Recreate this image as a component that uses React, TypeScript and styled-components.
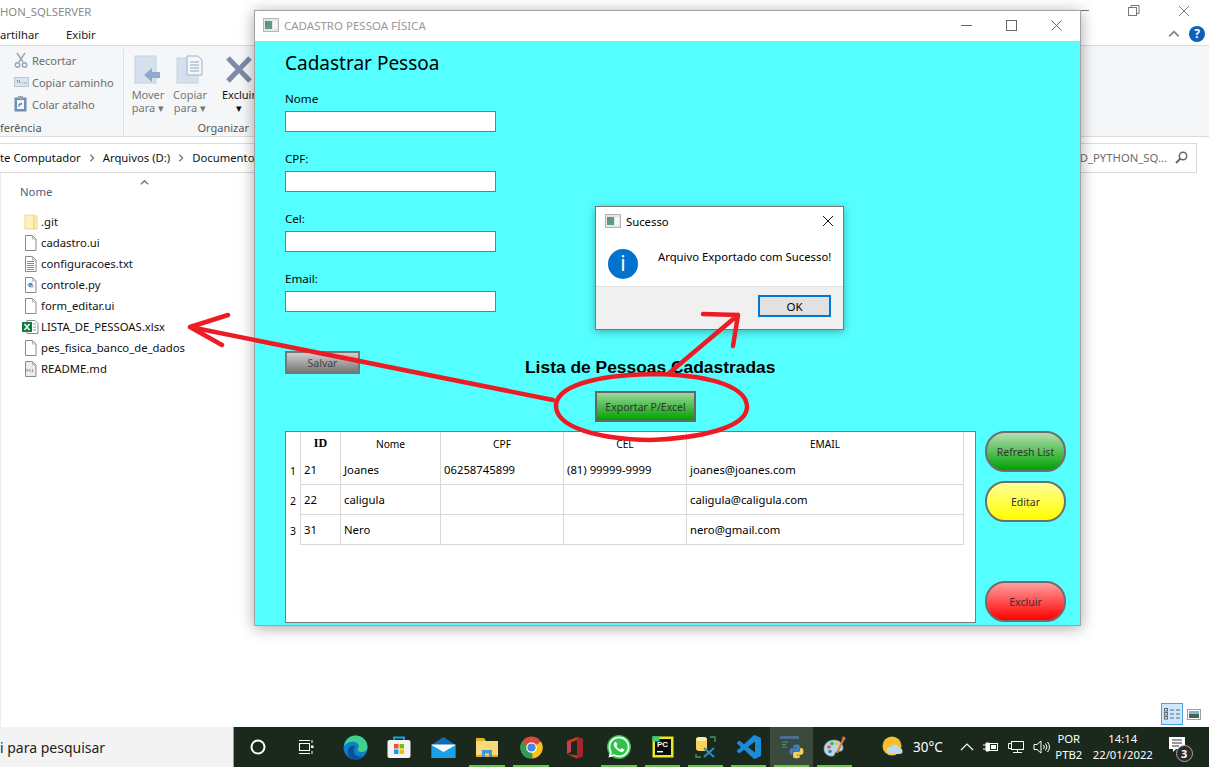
import React from "react";
import styled, { createGlobalStyle } from "styled-components";
import { FaWhatsapp } from "react-icons/fa";

const GlobalStyle = createGlobalStyle`
  html, body { margin: 0; padding: 0; background: #fff; }
  body { font-family: "Noto Sans", "Open Sans", sans-serif; font-size: 11.3px; color: #000; }
  * { box-sizing: border-box; }
`;

const files = [
  { name: ".git", icon: "folder" },
  { name: "cadastro.ui", icon: "doc" },
  { name: "configuracoes.txt", icon: "txt" },
  { name: "controle.py", icon: "py" },
  { name: "form_editar.ui", icon: "doc" },
  { name: "LISTA_DE_PESSOAS.xlsx", icon: "xls" },
  { name: "pes_fisica_banco_de_dados", icon: "doc" },
  { name: "README.md", icon: "md" },
];

const people = [
  { id: 21, nome: "Joanes", cpf: "06258745899", cel: "(81) 99999-9999", email: "joanes@joanes.com" },
  { id: 22, nome: "caligula", cpf: "", cel: "", email: "caligula@caligula.com" },
  { id: 31, nome: "Nero", cpf: "", cel: "", email: "nero@gmail.com" },
];

const FileIcon: React.FC<{ kind: string }> = ({ kind }) => {
  if (kind === "folder") {
    return (
      <svg width="14" height="16" viewBox="0 0 14 16">
        <path d="M1 1h8l4 1v13H1z" fill="#fff0bd" stroke="#ecd98f" />
        <path d="M10 2v13" stroke="#f5dd8e" strokeWidth="2" />
      </svg>
    );
  }
  if (kind === "xls") {
    return (
      <svg width="17" height="16" viewBox="0 0 17 16">
        <path d="M5 1.5h8l3 3v10H5z" fill="#fff" stroke="#8a8a8a" />
        <path d="M11 5h3M11 8h3M11 11h3" stroke="#6fae8a" />
        <rect x="0" y="3" width="10" height="10" fill="#107c41" />
        <path d="M2.5 5l5 6M7.5 5l-5 6" stroke="#fff" strokeWidth="1.4" />
      </svg>
    );
  }
  return (
    <svg width="13" height="16" viewBox="0 0 13 16">
      <path d="M1.5.5h7l3.5 3.5v11.5H1.5z" fill={kind === "md" ? "#ececec" : "#fff"} stroke="#8a8a8a" />
      <path d="M8.5.5V4H12" fill="none" stroke="#b0b0b0" />
      {kind === "txt" && <path d="M3 5.5h7M3 7.5h7M3 9.5h7M3 11.5h7M3 13.5h7" stroke="#8a8a8a" />}
      {kind === "py" && (
        <g>
          <circle cx="6.5" cy="8" r="2.3" fill="#4a84b5" />
          <path d="M6.5 8h3v2.5h-3z" fill="#9bb9cf" />
          <path d="M3.5 7h3v1.5h-3z" fill="#86abc9" />
        </g>
      )}
      {kind === "md" && <path d="M3 11V8l1.5 1.5L6 8v3M8.5 8v3M7.5 10l1 1 1-1" fill="none" stroke="#a0a0a0" />}
    </svg>
  );
};

const QtIcon: React.FC = () => (
  <svg width="16" height="14" viewBox="0 0 16 14">
    <rect x="0.5" y="0.5" width="15" height="13" fill="#e3e6e6" stroke="#b5b5b5" />
    <rect x="2" y="3" width="7" height="8" fill="#5f9a86" />
    <rect x="2" y="3" width="3" height="4" fill="#6f7fa6" />
    <rect x="10" y="3" width="4" height="8" fill="#f5f7f7" />
  </svg>
);

const Chevron: React.FC<{ up?: boolean; color?: string; size?: number }> = ({ up, color = "#000", size = 10 }) => (
  <svg width={size} height={size} viewBox="0 0 10 10">
    <path d={up ? "M1 7l4-4 4 4" : "M3 1l4 4-4 4"} fill="none" stroke={color} strokeWidth="1.6" />
  </svg>
);

const TaskIcons: Record<string, React.ReactNode> = {
  cortana: (
    <svg width="16" height="16" viewBox="0 0 16 16">
      <circle cx="8" cy="8" r="6.5" fill="none" stroke="#fff" strokeWidth="2" />
    </svg>
  ),
  tasks: (
    <svg width="16" height="16" viewBox="0 0 16 16" fill="none" stroke="#fff">
      <path d="M1 1.5h11M1 14.5h11" />
      <rect x="1.5" y="4.5" width="10" height="7" />
      <path d="M14 1v3M14 12v3" />
      <rect x="13" y="6.5" width="2.5" height="2.5" fill="#fff" stroke="none" />
    </svg>
  ),
  edge: (
    <svg width="25" height="25" viewBox="0 0 24 24">
      <circle cx="12" cy="12" r="11.5" fill="#0f7fc6" />
      <path d="M1 11C2 4 7 .5 12 .5c6 0 11.5 4.5 11.5 11 0 3-2.5 5-5.5 5-2 0-4-.8-4-2.5 0-1 1-1.5 1-3C15 8 12.5 6.5 10 6.5 6 6.5 2.5 8.5 1 11z" fill="#3fcf8e" />
      <path d="M11 23.5C6 23 3 18 5.5 13c1.5-3 5-3.5 6.5-1.5-2 1-2.5 4.5-.5 7 2 2.3 5 2.8 7.5 2-2 1.8-5 3-7.5 3z" fill="#0a4f9c" />
    </svg>
  ),
  store: (
    <svg width="24" height="24" viewBox="0 0 24 24">
      <path d="M7 5V2.5h10V5" fill="none" stroke="#1ba1e2" strokeWidth="1.8" />
      <rect x="0.5" y="5" width="23" height="18" rx="2" fill="#f4f4f4" />
      <rect x="7" y="9" width="4.5" height="4.5" fill="#f25022" />
      <rect x="12.5" y="9" width="4.5" height="4.5" fill="#7fba00" />
      <rect x="7" y="14.5" width="4.5" height="4.5" fill="#00a4ef" />
      <rect x="12.5" y="14.5" width="4.5" height="4.5" fill="#ffb900" />
    </svg>
  ),
  mail: (
    <svg width="25" height="23" viewBox="0 0 25 23">
      <path d="M.5 9L12.5 1l12 8v13H.5z" fill="#0f6cbd" />
      <path d="M.5 9h24v13H.5z" fill="#1ba1e8" />
      <path d="M.5 9l12 7 12-7v-.5H.5z" fill="#fff" />
    </svg>
  ),
  explorer: (
    <svg width="24" height="21" viewBox="0 0 24 21">
      <path d="M1 1h8l2 3h12v16H1z" fill="#e8b02e" />
      <rect x="1" y="4" width="22" height="14" fill="#f9d978" />
      <path d="M7 20v-7h10v7h-3v-3.5h-4V20z" fill="#3f96d8" />
      <rect x="1" y="18" width="6" height="2" fill="#e0a92c" />
      <rect x="17" y="18" width="6" height="2" fill="#e0a92c" />
    </svg>
  ),
  chrome: (
    <svg width="23" height="23" viewBox="0 0 24 24">
      <circle cx="12" cy="12" r="11.5" fill="#e0463a" />
      <path d="M12 12L22 6a11.5 11.5 0 0 1-9 17.5z" fill="#f5c518" />
      <path d="M12 12l1 11.5A11.5 11.5 0 0 1 2 6z" fill="#2f9e50" />
      <circle cx="12" cy="12" r="5.5" fill="#fff" />
      <circle cx="12" cy="12" r="4.3" fill="#4a86e8" />
    </svg>
  ),
  office: (
    <svg width="18" height="23" viewBox="0 0 18 23">
      <path d="M1 5L11 1l6 2v17l-6 2.5L1 18l10 1.5V4L5 6.5v9L1 18z" fill="#d83b01" />
      <path d="M11 1l6 2v17l-6 2.5z" fill="#a4262c" />
      <path d="M1 5l4 1.5v9L1 18z" fill="#c73e5c" />
    </svg>
  ),
  pycharm: (
    <svg width="22" height="22" viewBox="0 0 22 22">
      <rect x="0.5" y="0.5" width="21" height="21" fill="#e7e92d" />
      <rect x="3" y="3" width="16" height="16" fill="#0b0b0b" />
      <rect x="0.5" y="0.5" width="7" height="5" fill="#21d789" />
      <text x="5" y="11" fontSize="8" fontWeight="700" fontFamily="Liberation Sans, sans-serif" fill="#fff">PC</text>
      <rect x="5" y="15" width="6" height="1.4" fill="#fff" />
    </svg>
  ),
  db: (
    <svg width="22" height="23" viewBox="0 0 22 23">
      <rect x="1" y="1" width="11" height="14" rx="3" fill="#f4d35e" />
      <ellipse cx="6.5" cy="3" rx="5.5" ry="2" fill="#fbeeb0" />
      <path d="M15 1h5v5M1 18v3h5" fill="none" stroke="#3f9a63" strokeWidth="1.3" />
      <path d="M9 12l10 9M19 12L9 21" stroke="#2a8fd0" strokeWidth="2" />
    </svg>
  ),
  vscode: (
    <svg width="24" height="24" viewBox="0 0 24 24">
      <path fill="#1a8cdb" d="M23.15 2.587L18.21.21a1.494 1.494 0 0 0-1.705.29l-9.46 8.63-4.12-3.128a.999.999 0 0 0-1.276.057L.327 7.261A1 1 0 0 0 .326 8.74L3.899 12 .326 15.26a1 1 0 0 0 .001 1.479L1.65 17.94a.999.999 0 0 0 1.276.057l4.12-3.128 9.46 8.63a1.492 1.492 0 0 0 1.704.29l4.942-2.377A1.5 1.5 0 0 0 24 20.06V3.939a1.5 1.5 0 0 0-.85-1.352zm-5.146 14.861L10.826 12l7.178-5.448v10.896z" />
    </svg>
  ),
  python: (
    <svg width="24" height="24" viewBox="0 0 24 24">
      <rect x="0" y="1" width="19" height="16" fill="#37474a" />
      <rect x="0" y="1" width="19" height="3" fill="#4a6f8c" />
      <path d="M2 7h6M2 9.5h4M2 12h5" stroke="#4f9c5c" />
      <g transform="translate(9 9) scale(.62)">
        <path fill="#3f7fb5" d="M11.9 1C6.3 1 6.6 3.4 6.6 3.4V6H12v.8H4.4S.8 6.4.8 12s3.2 5.4 3.2 5.4h1.9v-2.6s-.1-3.2 3.1-3.2h5.4s3 0 3-2.9V3.9S18 1 11.9 1z" />
        <path fill="#f7d154" transform="rotate(180 12 12)" d="M11.9 1C6.3 1 6.6 3.4 6.6 3.4V6H12v.8H4.4S.8 6.4.8 12s3.2 5.4 3.2 5.4h1.9v-2.6s-.1-3.2 3.1-3.2h5.4s3 0 3-2.9V3.9S18 1 11.9 1z" />
      </g>
    </svg>
  ),
  paint: (
    <svg width="24" height="24" viewBox="0 0 24 24">
      <path d="M11 5C5 5 1 9 1 14c0 5 5 8 9 7 2.5-.5 1-3 3-4 3-1.5 7 .5 7-4 0-5-4-8-9-8z" fill="#b9d4e3" stroke="#7d9bb0" strokeWidth=".6" />
      <circle cx="6" cy="12" r="1.8" fill="#e2574c" />
      <circle cx="9" cy="8.5" r="1.8" fill="#3fae5a" />
      <circle cx="14" cy="8.5" r="1.8" fill="#f2c12e" />
      <circle cx="7" cy="16.5" r="1.8" fill="#3f82c8" />
      <path d="M14 18L21 3" stroke="#c9843a" strokeWidth="2" />
      <path d="M20 1l3 2-2 3-2.5-1z" fill="#e0663a" />
    </svg>
  ),
};

const tasks = [
  { key: "edge" },
  { key: "store" },
  { key: "mail" },
  { key: "explorer", running: true },
  { key: "chrome", running: true },
  { key: "office" },
  { key: "whatsapp", running: true },
  { key: "pycharm", running: true, narrow: true },
  { key: "db", running: true, narrow: true },
  { key: "vscode", running: true, narrow: true },
  { key: "python", running: true, narrow: true, current: true },
  { key: "paint", running: true, narrow: true },
];

export default function App() {
  return (
    <>
      <GlobalStyle />
      <Desktop>
        <TitleRow>
          <TitleText>HON_SQLSERVER</TitleText>
          <WinControls>
            <svg width="12" height="12" viewBox="0 0 12 12"><path d="M0 5.5h11" stroke="#777" /></svg>
            <svg width="12" height="12" viewBox="0 0 12 12" fill="none" stroke="#777"><rect x=".5" y="2.5" width="8" height="8" /><path d="M3 2.5V.5h8v8H8.5" /></svg>
            <svg width="12" height="12" viewBox="0 0 12 12" stroke="#777"><path d="M1 1l10 10M11 1L1 11" /></svg>
          </WinControls>
        </TitleRow>
        <TabsRow>
          <Tab $width={66}>artilhar</Tab>
          <Tab $width={40}>Exibir</Tab>
          <TabsRight>
            <Chevron up color="#8a8a8a" size={12} />
            <HelpBadge>?</HelpBadge>
          </TabsRight>
        </TabsRow>
        <Ribbon>
          <RibbonGroup $width={124}>
            <RibbonSmallList>
              <RibbonSmall>
                <svg width="14" height="16" viewBox="0 0 14 16" fill="none" stroke="#8ea4bf">
                  <path d="M3 1l6 9M11 1L5 10" strokeWidth="1.4" stroke="#9aa5b1" />
                  <circle cx="3.5" cy="13" r="2.2" strokeWidth="1.4" />
                  <circle cx="10.5" cy="13" r="2.2" strokeWidth="1.4" />
                </svg>
                Recortar
              </RibbonSmall>
              <RibbonSmall>
                <svg width="15" height="10" viewBox="0 0 15 10">
                  <rect x=".5" y=".5" width="14" height="9" fill="#dbe4f0" stroke="#b9c6d8" />
                  <path d="M3 3l1 3M5 3l1 3M8 6h1M10 6h1M12 6h1" stroke="#8a8a8a" />
                </svg>
                Copiar caminho
              </RibbonSmall>
              <RibbonSmall>
                <svg width="13" height="16" viewBox="0 0 13 16">
                  <rect x=".5" y="1.5" width="12" height="14" fill="#6f90b5" />
                  <rect x="3" y="4" width="7" height="9" fill="#f2f4f7" />
                  <rect x="4" y="0" width="5" height="3" fill="#9aa5b1" />
                  <path d="M5 11V8h3M6 9l2-2" stroke="#4a77a8" fill="none" />
                </svg>
                Colar atalho
              </RibbonSmall>
            </RibbonSmallList>
            <GroupLabel $align="left">ferência</GroupLabel>
          </RibbonGroup>
          <RibbonGroup $width={132}>
            <RibbonLarge>
              <RibbonTool $width={44}>
                <svg width="28" height="29" viewBox="0 0 28 29">
                  <rect x="1" y="1" width="21" height="27" fill="#d5e0ee" stroke="#c4d2e4" />
                  <path d="M10 20l8-7v4h8v6h-8v4z" fill="#90a9c8" />
                </svg>
                <ToolText>Mover<br />para ▾</ToolText>
              </RibbonTool>
              <RibbonTool $width={40}>
                <svg width="28" height="29" viewBox="0 0 28 29">
                  <rect x="1" y="3" width="21" height="25" fill="#d5e0ee" stroke="#c4d2e4" />
                  <path d="M11 1h11l4 4v15H11z" fill="#f4f6f9" stroke="#9fb2c9" />
                  <path d="M14 7h9M14 10h9M14 13h9M14 16h9" stroke="#9aa5b1" />
                </svg>
                <ToolText>Copiar<br />para ▾</ToolText>
              </RibbonTool>
              <ToolDivider />
              <RibbonTool $width={40} $strong>
                <svg width="28" height="29" viewBox="0 0 28 29">
                  <path d="M3 3l22 23M25 3L3 26" stroke="#7b8ba8" strokeWidth="5" />
                </svg>
                <ToolText>Excluir<br />▾</ToolText>
              </RibbonTool>
            </RibbonLarge>
            <GroupLabel $align="right">Organizar</GroupLabel>
          </RibbonGroup>
        </Ribbon>
        <AddressRow>
          <AddressBar>
            <span>te Computador</span>
            <Chevron color="#777" size={8} />
            <span>Arquivos (D:)</span>
            <Chevron color="#777" size={8} />
            <span>Documentos</span>
          </AddressBar>
          <SearchBox>
            <span>D_PYTHON_SQ...</span>
            <svg width="13" height="13" viewBox="0 0 13 13" fill="none" stroke="#666" strokeWidth="1.5">
              <circle cx="8" cy="5" r="3.7" />
              <path d="M5.5 7.5L1 12" strokeWidth="2" />
            </svg>
          </SearchBox>
        </AddressRow>
        <Content>
          <SortMark><Chevron up color="#777" size={9} /></SortMark>
          <ColumnHeader>Nome</ColumnHeader>
          <FileList>
            {files.map((f) => (
              <FileRow key={f.name}>
                <FileIconBox><FileIcon kind={f.icon} /></FileIconBox>
                {f.name}
              </FileRow>
            ))}
          </FileList>
          <ViewButtons>
            <ViewButton $active>
              <svg width="17" height="12" viewBox="0 0 17 12" fill="none" stroke="#666">
                <rect x=".5" y=".5" width="3" height="2.5" />
                <rect x=".5" y="4.5" width="3" height="2.5" />
                <rect x=".5" y="8.5" width="3" height="2.5" />
                <path d="M6 2h4M12 2h4M6 6h4M12 6h4M6 10h4M12 10h4" />
              </svg>
            </ViewButton>
            <ViewButton>
              <svg width="14" height="11" viewBox="0 0 14 11">
                <rect x=".5" y=".5" width="13" height="10" fill="#fff" stroke="#a0a0a0" />
                <rect x="2" y="2" width="10" height="3" fill="#7fb7dc" />
                <rect x="2" y="5" width="10" height="4" fill="#44684f" />
              </svg>
            </ViewButton>
          </ViewButtons>
        </Content>
        <Taskbar>
          <SearchField>i para pesquisar</SearchField>
          <TaskSlot $width={48}>{TaskIcons.cortana}</TaskSlot>
          <TaskSlot $width={48}>{TaskIcons.tasks}</TaskSlot>
          <TaskGap />
          {tasks.map((t) => (
            <TaskSlot
              key={t.key}
              $width={t.narrow ? 43 : 44}
              $running={t.running}
              $current={t.current}
            >
              {t.key === "whatsapp" ? (
                <WhatsappBubble><FaWhatsapp size={24} color="#fff" /></WhatsappBubble>
              ) : (
                TaskIcons[t.key]
              )}
            </TaskSlot>
          ))}
          <Tray>
            <svg width="22" height="22" viewBox="0 0 22 22">
              <circle cx="10" cy="10" r="9.5" fill="#f7bf2e" />
              <path d="M8 18a3.5 3.5 0 0 1 .5-7 4.5 4.5 0 0 1 8.5 1 3 3 0 0 1 1 6z" fill="#bcd9ef" />
            </svg>
            <Temp>30°C</Temp>
            <TrayIcons>
              <svg width="14" height="10" viewBox="0 0 14 10" fill="none" stroke="#fff" strokeWidth="1.2"><path d="M1 8l6-6 6 6" /></svg>
              <svg width="16" height="12" viewBox="0 0 16 12" fill="none" stroke="#fff">
                <path d="M0 4h3M0 8h3M3 2h3v8H3z" fill="#fff" />
                <rect x="6.5" y="2.5" width="8" height="7" />
                <rect x="8" y="4" width="5" height="4" fill="#fff" stroke="none" />
              </svg>
              <svg width="16" height="14" viewBox="0 0 16 14" fill="none" stroke="#fff">
                <rect x="3.5" y="1.5" width="12" height="8" />
                <path d="M9.5 9.5v3M5 12.5h9M.5 3.5h3M.5 3.5v5h3" />
              </svg>
              <svg width="17" height="14" viewBox="0 0 17 14" fill="none" stroke="#fff">
                <path d="M1 4.5h3l4-3.5v12L4 9.5H1z" />
                <path d="M10.5 5a3 3 0 0 1 0 4M12.5 3.5a5.5 5.5 0 0 1 0 7M14.5 2a8 8 0 0 1 0 10" />
              </svg>
            </TrayIcons>
            <LangBlock>
              <span>POR</span>
              <span>PTB2</span>
            </LangBlock>
            <ClockBlock>
              <span>14:14</span>
              <span>22/01/2022</span>
            </ClockBlock>
            <NotifyBox>
              <svg width="17" height="16" viewBox="0 0 17 16">
                <path d="M0 0h16v12H7l-3 3v-3H0z" fill="#fff" />
                <path d="M3 3h10M3 6h10M3 9h7" stroke="#333" />
              </svg>
              <NotifyBadge>3</NotifyBadge>
            </NotifyBox>
          </Tray>
        </Taskbar>

        <MainWindow>
          <WindowTitle>
            <QtIcon />
            <WindowCaption>CADASTRO PESSOA FÍSICA</WindowCaption>
            <WindowControls>
              <svg width="11" height="11" viewBox="0 0 11 11"><path d="M0 5.5h11" stroke="#666" /></svg>
              <svg width="11" height="11" viewBox="0 0 11 11"><rect x=".5" y=".5" width="10" height="10" fill="none" stroke="#666" /></svg>
              <svg width="11" height="11" viewBox="0 0 11 11" stroke="#666"><path d="M.5.5l10 10M10.5.5l-10 10" /></svg>
            </WindowControls>
          </WindowTitle>
          <WindowBody>
            <FormHeading>Cadastrar Pessoa</FormHeading>
            {["Nome", "CPF:", "Cel:", "Email:"].map((label) => (
              <Field key={label}>
                <FieldLabel>{label}</FieldLabel>
                <FieldInput />
              </Field>
            ))}
            <MiddleRow>
              <SaveButton>Salvar</SaveButton>
              <ListHead>
                <ListTitle>Lista de Pessoas Cadastradas</ListTitle>
                <ExportButton>Exportar P/Excel</ExportButton>
              </ListHead>
            </MiddleRow>
            <TableRow>
              <TableFrame>
                <PeopleTable>
                  <colgroup>
                    <col style={{ width: 14 }} />
                    <col style={{ width: 41 }} />
                    <col style={{ width: 100 }} />
                    <col style={{ width: 123 }} />
                    <col style={{ width: 123 }} />
                    <col style={{ width: 277 }} />
                  </colgroup>
                  <thead>
                    <tr>
                      <CornerCell />
                      <HeadCell $first $serif>ID</HeadCell>
                      <HeadCell>Nome</HeadCell>
                      <HeadCell>CPF</HeadCell>
                      <HeadCell>CEL</HeadCell>
                      <HeadCell>EMAIL</HeadCell>
                    </tr>
                  </thead>
                  <tbody>
                    {people.map((p, i) => (
                      <tr key={p.id}>
                        <RowHead>{i + 1}</RowHead>
                        <DataCell $first>{p.id}</DataCell>
                        <DataCell>{p.nome}</DataCell>
                        <DataCell>{p.cpf}</DataCell>
                        <DataCell>{p.cel}</DataCell>
                        <DataCell>{p.email}</DataCell>
                      </tr>
                    ))}
                  </tbody>
                </PeopleTable>
              </TableFrame>
              <SideButtons>
                <PillButton $from="#b2dfb2" $to="#00a000">Refresh List</PillButton>
                <PillButton $from="#ffff99" $to="#ffff00">Editar</PillButton>
                <PillButton $from="#ff9f9f" $to="#ff0000" $pushed>Excluir</PillButton>
              </SideButtons>
            </TableRow>
          </WindowBody>
        </MainWindow>

        <Dialog>
          <DialogTitle>
            <QtIcon />
            <DialogCaption>Sucesso</DialogCaption>
            <svg width="12" height="12" viewBox="0 0 12 12" stroke="#111"><path d="M1 1l10 10M11 1L1 11" /></svg>
          </DialogTitle>
          <DialogBody>
            <InfoCircle>i</InfoCircle>
            <DialogText>Arquivo Exportado com Sucesso!</DialogText>
          </DialogBody>
          <DialogFooter>
            <OkButton>OK</OkButton>
          </DialogFooter>
        </Dialog>

        <Annotations width="1209" height="767" viewBox="0 0 1209 767" fill="none" stroke="#ed1c24" strokeWidth="4.5" strokeLinecap="round">
          <path d="M553 400L190 327M190 327L228 315M190 327L222 345" />
          <path d="M556 404C560 382 610 374 660 374C715 376 748 388 747 408C745 428 700 438 650 440C600 439 554 428 556 404Z" />
          <path d="M668 374L738 315M738 315L703 314M738 315L733 346" />
        </Annotations>
      </Desktop>
    </>
  );
}

const Desktop = styled.div`
  position: relative;
  width: 1209px;
  height: 767px;
  overflow: hidden;
  display: flex;
  flex-direction: column;
  background: #fff;
`;

const TitleRow = styled.div`
  height: 22px;
  display: flex;
  align-items: center;
  justify-content: space-between;
  padding-right: 19px;
`;

const TitleText = styled.div`
  color: #8a8a8a;
`;

const WinControls = styled.div`
  display: flex;
  gap: 38px;
`;

const TabsRow = styled.div`
  height: 23px;
  display: flex;
  align-items: center;
  padding: 1px 4px 0 0;
`;

const Tab = styled.div<{ $width: number }>`
  width: ${(p) => p.$width}px;
  color: #222;
`;

const TabsRight = styled.div`
  margin-left: auto;
  display: flex;
  align-items: center;
  gap: 9px;
`;

const HelpBadge = styled.div`
  width: 16px;
  height: 16px;
  border-radius: 50%;
  background: #0b62b8;
  color: #fff;
  font-weight: 700;
  font-size: 12px;
  line-height: 16px;
  text-align: center;
`;

const Ribbon = styled.div`
  height: 92px;
  display: flex;
  background: #f5f6f7;
  border-top: 1px solid #dadbdc;
  border-bottom: 1px solid #dadbdc;
`;

const RibbonGroup = styled.div<{ $width: number }>`
  width: ${(p) => p.$width}px;
  display: flex;
  flex-direction: column;
  border-right: 1px solid #dfe1e3;
  margin-top: 3px;
`;

const RibbonSmallList = styled.div`
  flex: 1;
  display: flex;
  flex-direction: column;
  gap: 4px;
  padding: 2px 0 0 14px;
`;

const RibbonSmall = styled.div`
  height: 18px;
  display: grid;
  grid-template-columns: 18px auto;
  align-items: center;
  color: #6d6d6d;
  font-size: 11px;
  white-space: nowrap;
`;

const GroupLabel = styled.div<{ $align: string }>`
  height: 16px;
  line-height: 16px;
  font-size: 11px;
  color: #555;
  text-align: ${(p) => p.$align};
  padding-right: 6px;
`;

const RibbonLarge = styled.div`
  flex: 1;
  display: flex;
  padding: 6px 0 0 2px;
`;

const RibbonTool = styled.div<{ $width: number; $strong?: boolean }>`
  width: ${(p) => p.$width}px;
  display: flex;
  flex-direction: column;
  align-items: center;
  color: ${(p) => (p.$strong ? "#111" : "#777")};
  flex-shrink: 0;
`;

const ToolText = styled.div`
  font-size: 11px;
  line-height: 13px;
  text-align: center;
  margin-top: 4px;
  white-space: nowrap;
`;

const ToolDivider = styled.div`
  width: 1px;
  height: 55px;
  background: #dfe1e3;
  margin: 0 3px 0 6px;
`;

const AddressRow = styled.div`
  height: 30px;
  margin-top: 6px;
  display: flex;
  gap: 6px;
  padding-right: 12px;
  flex-shrink: 0;
`;

const AddressBar = styled.div`
  flex: 1;
  display: flex;
  align-items: center;
  gap: 7px;
  padding-bottom: 1px;
  border-top: 1px solid #d9d9d9;
  border-bottom: 1px solid #d9d9d9;
  color: #111;
`;

const SearchBox = styled.div`
  width: 190px;
  display: flex;
  align-items: center;
  justify-content: flex-end;
  gap: 8px;
  padding: 0 8px 1px 0;
  border: 1px solid #d9d9d9;
  color: #6d6d6d;
`;

const Content = styled.div`
  position: relative;
  flex: 1;
  padding-left: 19px;
  display: flex;
  flex-direction: column;
  min-height: 0;
  border-left: 1px solid #ececec;
`;

const SortMark = styled.div`
  position: absolute;
  left: 139px;
  top: 2px;
`;

const ColumnHeader = styled.div`
  height: 38px;
  line-height: 38px;
  color: #4c607a;
`;

const FileList = styled.div`
  display: flex;
  flex-direction: column;
`;

const FileRow = styled.div`
  height: 21px;
  display: flex;
  align-items: center;
  color: #111;
`;

const FileIconBox = styled.div`
  width: 21px;
  height: 16px;
  display: flex;
  justify-content: center;
`;

const ViewButtons = styled.div`
  margin: auto 0 1px;
  align-self: flex-end;
  display: flex;
  padding-right: 4px;
  height: 23px;
`;

const ViewButton = styled.div<{ $active?: boolean }>`
  width: 22px;
  height: 22px;
  display: flex;
  align-items: center;
  justify-content: center;
  background: ${(p) => (p.$active ? "#cce8ff" : "transparent")};
  border: 1px solid ${(p) => (p.$active ? "#4ba6e0" : "transparent")};
`;

const Taskbar = styled.div`
  height: 40px;
  flex-shrink: 0;
  display: flex;
  align-items: stretch;
  background: #1b291d;
`;

const SearchField = styled.div`
  width: 234px;
  background: #f3f3f3;
  color: #222;
  font-size: 14px;
  line-height: 42px;
  border-right: 1px solid #999;
`;

const TaskSlot = styled.div<{ $width: number; $running?: boolean; $current?: boolean }>`
  position: relative;
  width: ${(p) => p.$width}px;
  display: flex;
  align-items: center;
  justify-content: center;
  background: ${(p) => (p.$current ? "#3b4a3c" : "transparent")};
  &::after {
    content: "";
    display: ${(p) => (p.$running ? "block" : "none")};
    position: absolute;
    left: 4px;
    right: 4px;
    bottom: 0;
    height: 2px;
    background: #6cc24e;
  }
`;

const TaskGap = styled.div`
  width: 3px;
`;

const WhatsappBubble = styled.div`
  width: 24px;
  height: 24px;
  border-radius: 50%;
  background: #30c24a;
  display: flex;
  align-items: center;
  justify-content: center;
`;

const Tray = styled.div`
  flex: 1;
  display: flex;
  align-items: center;
  color: #fff;
  padding-left: 26px;
`;

const Temp = styled.div`
  font-size: 13.5px;
  margin-left: 9px;
`;

const TrayIcons = styled.div`
  display: flex;
  align-items: center;
  gap: 9px;
  margin-left: 17px;
`;

const LangBlock = styled.div`
  display: flex;
  flex-direction: column;
  align-items: center;
  width: 30px;
  margin-left: 4px;
  line-height: 16px;
`;

const ClockBlock = styled.div`
  display: flex;
  flex-direction: column;
  align-items: center;
  width: 64px;
  margin-left: 7px;
  line-height: 16px;
`;

const NotifyBox = styled.div`
  position: relative;
  margin-left: 14px;
  width: 26px;
  height: 20px;
`;

const NotifyBadge = styled.div`
  position: absolute;
  left: 7px;
  top: 8px;
  width: 17px;
  height: 17px;
  border-radius: 50%;
  border: 1px solid #aaa;
  background: #2a2a2a;
  font-size: 11px;
  font-weight: 700;
  line-height: 15px;
  text-align: center;
`;

const MainWindow = styled.div`
  position: absolute;
  left: 254px;
  top: 10px;
  width: 827px;
  height: 616px;
  display: flex;
  flex-direction: column;
  background: #fff;
  border: 1px solid #a3a3a3;
  box-shadow: 0 2px 14px rgba(0, 0, 0, 0.35);
`;

const WindowTitle = styled.div`
  height: 30px;
  flex-shrink: 0;
  display: flex;
  align-items: center;
  padding: 0 18px 2px 8px;
`;

const WindowCaption = styled.div`
  margin-left: 5px;
  color: #999;
  font-size: 11.5px;
`;

const WindowControls = styled.div`
  margin-left: auto;
  display: flex;
  gap: 34px;
`;

const WindowBody = styled.div`
  flex: 1;
  display: flex;
  flex-direction: column;
  background: #55ffff;
  padding: 0 14px 2px 30px;
  min-height: 0;
`;

const FormHeading = styled.div`
  height: 50px;
  padding-top: 9px;
  font-size: 19px;
  line-height: 26px;
`;

const Field = styled.div`
  height: 60px;
  display: flex;
  flex-direction: column;
`;

const FieldLabel = styled.div`
  height: 20px;
  line-height: 16px;
  font-size: 11.6px;
`;

const FieldInput = styled.div`
  width: 211px;
  height: 21px;
  background: #fff;
  border: 1px solid #7a7a7a;
`;

const MiddleRow = styled.div`
  height: 100px;
  display: flex;
  align-items: flex-start;
`;

const GradientButton = styled.button`
  padding: 0;
  font-family: inherit;
  font-size: 10.5px;
  border-style: solid;
  border-width: 2px;
  cursor: default;
`;

const SaveButton = styled(GradientButton)`
  width: 75px;
  height: 23px;
  margin-top: 20px;
  color: #444;
  border-color: #777;
  background: linear-gradient(#cfcfcf, #777);
`;

const ListHead = styled.div`
  margin-left: 165px;
  padding-top: 26px;
  display: flex;
  flex-direction: column;
  align-items: flex-start;
`;

const ListTitle = styled.div`
  font-family: "Liberation Sans", Arial, sans-serif;
  font-weight: 700;
  font-size: 17.4px;
  line-height: 21px;
  white-space: nowrap;
`;

const ExportButton = styled(GradientButton)`
  width: 101px;
  height: 31px;
  margin: 13px 0 0 70px;
  color: #333;
  border-color: #666;
  background: linear-gradient(#9ad89a, #00a000);
`;

const TableRow = styled.div`
  flex: 1;
  display: flex;
  gap: 9px;
  min-height: 0;
`;

const TableFrame = styled.div`
  width: 691px;
  background: #fff;
  border: 1px solid #7a7a7a;
`;

const PeopleTable = styled.table`
  table-layout: fixed;
  width: 678px;
  border-collapse: separate;
  border-spacing: 0;
  font-size: 10.5px;
`;

const CornerCell = styled.th`
  height: 23px;
  padding: 0;
`;

const HeadCell = styled.th<{ $first?: boolean; $serif?: boolean }>`
  padding: 0;
  height: 23px;
  font-weight: ${(p) => (p.$serif ? 700 : 400)};
  font-family: ${(p) => (p.$serif ? '"Liberation Serif", serif' : "inherit")};
  font-size: ${(p) => (p.$serif ? "12px" : "10.2px")};
  border-left: ${(p) => (p.$first ? "1px solid #d8d8d8" : "none")};
  border-right: 1px solid #d8d8d8;
`;

const RowHead = styled.td`
  padding: 1px 0 0 4px;
  font-size: 10.5px;
`;

const DataCell = styled.td<{ $first?: boolean }>`
  height: 30px;
  padding: 0 0 1px 3px;
  font-size: 11.3px;
  white-space: nowrap;
  overflow: hidden;
  border-left: ${(p) => (p.$first ? "1px solid #d8d8d8" : "none")};
  border-right: 1px solid #d8d8d8;
  border-bottom: 1px solid #d8d8d8;
`;

const SideButtons = styled.div`
  width: 81px;
  display: flex;
  flex-direction: column;
  gap: 9px;
`;

const PillButton = styled(GradientButton)<{ $from: string; $to: string; $pushed?: boolean }>`
  height: 41px;
  border-radius: 20px;
  border-color: #6e6e6e;
  color: #333;
  background: linear-gradient(${(p) => p.$from}, ${(p) => p.$to});
  margin-top: ${(p) => (p.$pushed ? "50px" : "0")};
`;

const Dialog = styled.div`
  position: absolute;
  left: 595px;
  top: 206px;
  width: 249px;
  height: 124px;
  display: flex;
  flex-direction: column;
  background: #fff;
  border: 1px solid #777;
  box-shadow: 0 2px 8px rgba(0, 0, 0, 0.3);
`;

const DialogTitle = styled.div`
  height: 30px;
  display: flex;
  align-items: center;
  padding: 0 9px 2px 9px;
`;

const DialogCaption = styled.div`
  flex: 1;
  margin-left: 5px;
`;

const DialogBody = styled.div`
  flex: 1;
  display: flex;
  padding: 12px 0 0 12px;
`;

const InfoCircle = styled.div`
  width: 30px;
  height: 30px;
  border-radius: 50%;
  background: #0073cf;
  color: #fff;
  font-size: 21px;
  line-height: 29px;
  text-align: center;
`;

const DialogText = styled.div`
  margin-left: 20px;
  line-height: 16px;
  white-space: nowrap;
`;

const DialogFooter = styled.div`
  height: 43px;
  display: flex;
  justify-content: flex-end;
  padding: 8px 12px 0 0;
  background: #f0f0f0;
  border-top: 1px solid #dfdfdf;
`;

const OkButton = styled.button`
  width: 73px;
  height: 22px;
  padding: 0;
  font-family: inherit;
  font-size: 11.5px;
  background: #e1e1e1;
  border: 2px solid #0078d7;
`;

const Annotations = styled.svg`
  position: absolute;
  left: 0;
  top: 0;
  pointer-events: none;
`;
